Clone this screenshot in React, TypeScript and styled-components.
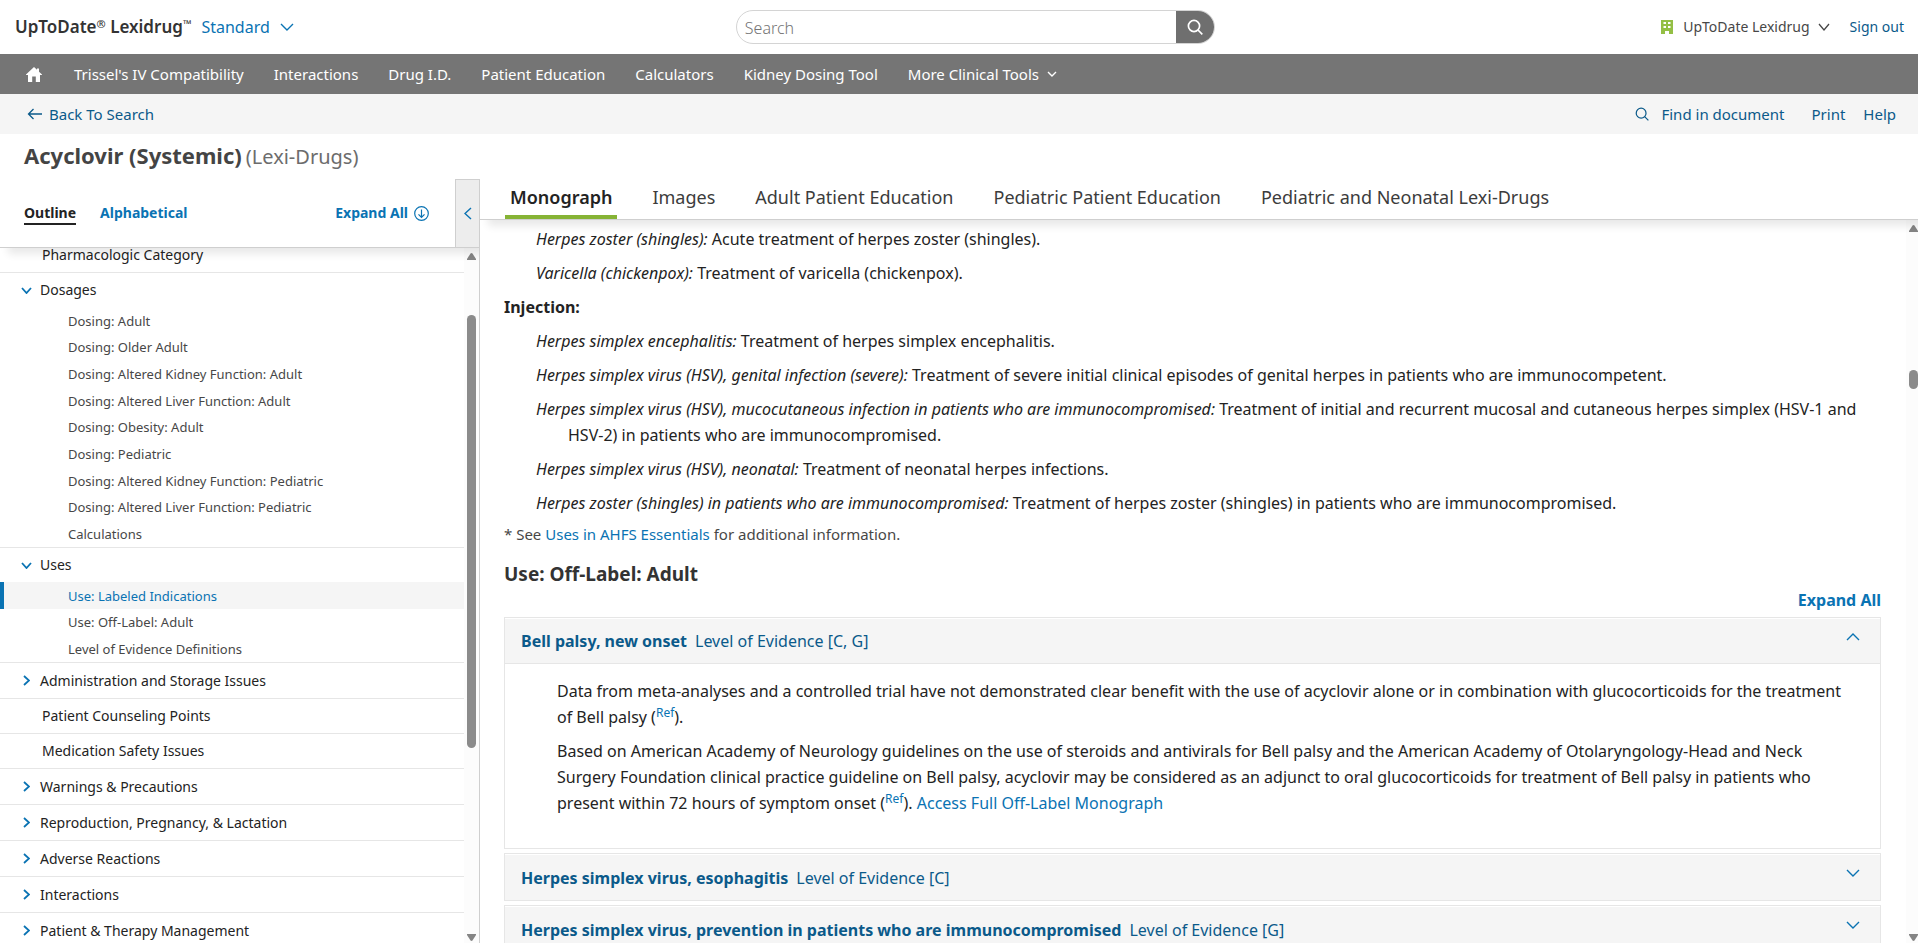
import React, { useState } from 'react';
import styled, { createGlobalStyle, css } from 'styled-components';

const c = {
  blue: '#0a73b3',
  deep: '#0b5a8a',
  text: '#232323',
  soft: '#474747',
  line: '#e6e6e6',
  edge: '#cfcfcf',
  panel: '#f5f5f5',
  bar: '#757575',
  green: '#86b335',
};

const GlobalStyle = createGlobalStyle`
  *, *::before, *::after { box-sizing: border-box; }
  body {
    margin: 0;
    background: #fff;
    color: ${c.text};
    font-family: "Noto Sans", "Open Sans", sans-serif;
    font-size: 16px;
  }
  a { color: inherit; text-decoration: none; }
  ul { list-style: none; margin: 0; padding: 0; }
  p, h1, h2, h3 { margin: 0; }
  button { font: inherit; color: inherit; background: none; border: 0; padding: 0; cursor: pointer; }
  svg { display: block; flex: none; }
`;

const Page = styled.div`
  display: flex;
  flex-direction: column;
  height: 100vh;
  overflow: hidden;
`;

const Header = styled.header`
  display: grid;
  grid-template-columns: minmax(0, 46fr) minmax(0, 30fr) minmax(0, 44fr);
  align-items: center;
  flex: none;
  height: 54px;
  padding-left: 1px;
`;

const Brand = styled.div`
  display: flex;
  align-items: center;
  gap: 10px;
  padding-left: 14px;
  white-space: nowrap;
`;

const Logo = styled.span`
  font-size: 17px;
  font-weight: 600;
  line-height: 24px;
  color: #333;
`;

const Mark = styled.sup`
  font-size: 11px;
  font-weight: 500;
  line-height: 0;
  vertical-align: 5px;
`;

const EditionButton = styled.button`
  display: flex;
  align-items: center;
  gap: 10px;
  line-height: 24px;
  color: ${c.blue};
`;

const SearchForm = styled.form`
  display: flex;
  height: 34px;
  border: 1px solid #d4d4d4;
  border-radius: 17px;
  overflow: hidden;
`;

const SearchInput = styled.input`
  flex: 1;
  min-width: 0;
  border: 0;
  outline: 0;
  padding: 2px 8px 0;
  font: inherit;
  font-weight: 300;
  background: none;
  &::placeholder { color: #757575; opacity: 1; }
`;

const SearchButton = styled.button`
  display: grid;
  place-items: center;
  width: 38px;
  background: #6f6f6f;
  color: #fff;
`;

const Account = styled.div`
  display: flex;
  align-items: center;
  justify-content: flex-end;
  gap: 20px;
  padding-right: 14px;
  font-size: 14px;
  line-height: 20px;
  white-space: nowrap;
`;

const AccountButton = styled.button`
  display: flex;
  align-items: center;
  gap: 8px;
  color: ${c.soft};
`;

const Building = styled.svg`
  margin-right: 2px;
`;

const DeepLink = styled.a`
  display: flex;
  align-items: center;
  color: ${c.deep};
`;

const NavBar = styled.nav`
  display: flex;
  align-items: center;
  flex: none;
  gap: 30px;
  height: 40px;
  padding-left: 26px;
  background: ${c.bar};
  color: #fff;
  font-size: 15px;
  line-height: 20px;
  white-space: nowrap;
`;

const HomeLink = styled.a`
  margin-right: 2px;
`;

const MoreButton = styled.button`
  display: flex;
  align-items: center;
  gap: 8px;
`;

const CrumbBar = styled.div`
  display: flex;
  align-items: center;
  justify-content: space-between;
  flex: none;
  height: 40px;
  padding: 0 22px 0 27px;
  background: ${c.panel};
  font-size: 15px;
  line-height: 20px;
`;

const BackLink = styled(DeepLink)`
  gap: 7px;
`;

const DocActions = styled.div`
  display: flex;
  gap: 18px;
`;

const FindButton = styled.button`
  display: flex;
  align-items: center;
  gap: 12px;
  margin-right: 9px;
  color: ${c.deep};
`;

const TitleRow = styled.div`
  display: flex;
  align-items: baseline;
  gap: 4px;
  flex: none;
  height: 45px;
  padding: 6px 0 0 24px;
`;

const Title = styled.h1`
  font-size: 22px;
  font-weight: 700;
  line-height: 30px;
  color: #444;
`;

const Subtitle = styled.span`
  font-size: 20px;
  line-height: 30px;
  color: #6c6c6c;
`;

const Workspace = styled.div`
  display: grid;
  grid-template-columns: 480px minmax(0, 1fr);
  flex: 1;
  min-height: 0;
`;

const Sidebar = styled.aside`
  display: flex;
  flex-direction: column;
  min-height: 0;
  overflow: hidden;
  border-right: 1px solid ${c.edge};
`;

const SidebarHead = styled.div`
  position: relative;
  z-index: 1;
  display: flex;
  flex: none;
  height: 69px;
  border-bottom: 1px solid ${c.edge};
  background: #fff;
  box-shadow: 8px 6px 8px rgba(0, 0, 0, 0.09);
`;

const SidebarTabs = styled.div`
  display: flex;
  align-items: center;
  flex: 1;
  gap: 24px;
  padding: 0 26px 0 24px;
  font-size: 14px;
  font-weight: 700;
  line-height: 20px;
`;

const OrderTab = styled.button<{ $active?: boolean }>`
  padding-top: 2px;
  border-bottom: 2px solid ${(p) => (p.$active ? c.text : 'transparent')};
  color: ${(p) => (p.$active ? c.text : c.blue)};
`;

const ExpandOutline = styled.button`
  display: flex;
  align-items: center;
  gap: 6px;
  margin-left: auto;
  color: ${c.blue};
`;

const CollapseButton = styled.button`
  display: grid;
  place-items: center;
  width: 24px;
  border: 1px solid ${c.edge};
  border-width: 1px 0 0 1px;
  background: #ededed;
  color: ${c.blue};
`;

const ScrollArea = styled.div<{ $bar: number }>`
  display: grid;
  grid-template-columns: minmax(0, 1fr) ${(p) => p.$bar}px;
  flex: 1;
  min-height: 0;
`;

const Viewport = styled.div`
  min-height: 0;
  overflow: hidden;
`;

const Bar = styled.div`
  display: flex;
  flex-direction: column;
  align-items: flex-end;
  min-height: 0;
  padding: 5px 0 2px;
  background: #fcfcfc;
  color: #858585;
`;

const SideBarTrack = styled(Bar)`
  padding-right: 3px;
`;

const Space = styled.div<{ $part: number }>`
  flex: ${(p) => p.$part} 1 0;
`;

const Thumb = styled(Space)`
  width: 9px;
  border-radius: 5px;
  background: #8b8b8b;
`;

const OutlineList = styled.ul`
  margin-top: -10px;
  font-size: 14px;
  line-height: 20px;
`;

const OutlineItem = styled.li`
  & + & { border-top: 1px solid ${c.line}; }
`;

const Leaf = styled.a`
  display: flex;
  align-items: center;
  height: 34px;
  padding-left: 42px;
`;

const GroupButton = styled.button<{ $open?: boolean }>`
  display: flex;
  align-items: center;
  gap: 8px;
  width: 100%;
  height: ${(p) => (p.$open ? 34 : 35)}px;
  padding-left: 20px;
  text-align: left;
`;

const SubItem = styled.li`
  height: 27px;
  &:nth-child(3n + 2) { height: 26px; }
`;

const SubLink = styled.a<{ $current?: boolean }>`
  display: flex;
  align-items: center;
  height: 100%;
  padding-left: 68px;
  font-size: 13px;
  color: ${c.soft};
  ${(p) => p.$current && css`
    background: ${c.panel};
    color: ${c.blue};
    box-shadow: inset 4px 0 0 ${c.blue};
  `}
`;

const Main = styled.main`
  display: flex;
  flex-direction: column;
  min-height: 0;
  overflow: hidden;
`;

const DocTabs = styled.nav`
  position: relative;
  z-index: 1;
  display: flex;
  flex: none;
  gap: 30px;
  height: 41px;
  padding-left: 25px;
  border-bottom: 1px solid ${c.edge};
  background: #fff;
  box-shadow: 8px 6px 8px rgba(0, 0, 0, 0.09);
  white-space: nowrap;
`;

const DocTab = styled.a<{ $active?: boolean }>`
  padding: 5px 5px 0;
  border-bottom: 4px solid ${(p) => (p.$active ? c.green : 'transparent')};
  font-size: 18px;
  font-weight: ${(p) => (p.$active ? 600 : 400)};
  line-height: 26px;
  color: ${(p) => (p.$active ? c.text : '#3c3c3c')};
`;

const Article = styled.article`
  padding: 6px 25px 0 24px;
  line-height: 26px;
`;

const Indication = styled.p`
  margin: 0 0 8px 64px;
  text-indent: -32px;
`;

const Route = styled.h3`
  margin-bottom: 8px;
  font-size: 16px;
  font-weight: 700;
  line-height: 26px;
`;

const Footnote = styled.p`
  font-size: 15px;
  line-height: 20px;
  color: ${c.soft};
`;

const Link = styled.a`
  color: ${c.blue};
`;

const SectionTitle = styled.h2`
  margin-top: 17px;
  font-size: 19px;
  line-height: 26px;
  color: #333;
`;

const ExpandRow = styled.div`
  display: flex;
  justify-content: flex-end;
  margin-bottom: 4px;
`;

const ExpandAll = styled.button`
  font-weight: 700;
  line-height: 26px;
  color: ${c.blue};
`;

const Card = styled.section`
  margin-bottom: 4px;
  border: 1px solid ${c.line};
  padding-top: 1px;
`;

const CardHead = styled.button<{ $open?: boolean }>`
  display: flex;
  align-items: center;
  gap: 8px;
  width: 100%;
  height: 45px;
  padding: 0 20px 0 16px;
  border-bottom: ${(p) => (p.$open ? `1px solid ${c.line}` : '0')};
  background: ${c.panel};
  color: ${c.deep};
  text-align: left;
`;

const CardIcon = styled.span`
  align-self: flex-start;
  margin: 14px 0 0 auto;
  color: ${c.blue};
`;

const CardBody = styled.div`
  padding: 14px 32px 32px 52px;
`;

const Note = styled.p`
  & + & { margin-top: 8px; }
`;

const Ref = styled.sup`
  font-size: 12px;
  line-height: 0;
  vertical-align: 6px;
  color: ${c.blue};
`;

type Dir = 'up' | 'down' | 'left' | 'right';

/* An open angle; `long` is its span and `short` its depth. */
function Chevron({ dir, long, short, weight }: { dir: Dir; long: number; short: number; weight: number }) {
  const vertical = dir === 'up' || dir === 'down';
  const w = (vertical ? long : short) + 2;
  const h = (vertical ? short : long) + 2;
  const points = {
    down: `1,1 ${w / 2},${h - 1} ${w - 1},1`,
    up: `1,${h - 1} ${w / 2},1 ${w - 1},${h - 1}`,
    right: `1,1 ${w - 1},${h / 2} 1,${h - 1}`,
    left: `${w - 1},1 1,${h / 2} ${w - 1},${h - 1}`,
  }[dir];
  return (
    <svg width={w} height={h} viewBox={`0 0 ${w} ${h}`} fill="none" stroke="currentColor" strokeWidth={weight} aria-hidden="true">
      <polyline points={points} />
    </svg>
  );
}

function Magnifier({ size, weight }: { size: number; weight: number }) {
  return (
    <svg width={size} height={size} viewBox="0 0 16 16" fill="none" stroke="currentColor" strokeWidth={weight} aria-hidden="true">
      <circle cx="7" cy="7" r="5.6" />
      <path d="M11 11l4.3 4.3" />
    </svg>
  );
}

function Arrowhead({ down }: { down?: boolean }) {
  return (
    <svg width="9" height="7" viewBox="0 0 9 7" fill="currentColor" aria-hidden="true">
      <path d={down ? 'M0 0h9v1L5.5 6.5Q4.5 7.4 3.5 6.5L0 1z' : 'M0 7h9V6L5.5.5Q4.5-.4 3.5.5L0 6z'} />
    </svg>
  );
}

const navLinks = [
  "Trissel's IV Compatibility",
  'Interactions',
  'Drug I.D.',
  'Patient Education',
  'Calculators',
  'Kidney Dosing Tool',
];

type Entry = { label: string; children?: string[]; group?: boolean };

const outline: Entry[] = [
  { label: 'Pharmacologic Category' },
  {
    label: 'Dosages',
    group: true,
    children: [
      'Dosing: Adult',
      'Dosing: Older Adult',
      'Dosing: Altered Kidney Function: Adult',
      'Dosing: Altered Liver Function: Adult',
      'Dosing: Obesity: Adult',
      'Dosing: Pediatric',
      'Dosing: Altered Kidney Function: Pediatric',
      'Dosing: Altered Liver Function: Pediatric',
      'Calculations',
    ],
  },
  {
    label: 'Uses',
    group: true,
    children: ['Use: Labeled Indications', 'Use: Off-Label: Adult', 'Level of Evidence Definitions'],
  },
  { label: 'Administration and Storage Issues', group: true },
  { label: 'Patient Counseling Points' },
  { label: 'Medication Safety Issues' },
  { label: 'Warnings & Precautions', group: true },
  { label: 'Reproduction, Pregnancy, & Lactation', group: true },
  { label: 'Adverse Reactions', group: true },
  { label: 'Interactions', group: true },
  { label: 'Patient & Therapy Management', group: true },
];

const docTabs = [
  'Monograph',
  'Images',
  'Adult Patient Education',
  'Pediatric Patient Education',
  'Pediatric and Neonatal Lexi-Drugs',
];

const oral = [
  ['Herpes zoster (shingles):', 'Acute treatment of herpes zoster (shingles).'],
  ['Varicella (chickenpox):', 'Treatment of varicella (chickenpox).'],
];

const injection = [
  ['Herpes simplex encephalitis:', 'Treatment of herpes simplex encephalitis.'],
  [
    'Herpes simplex virus (HSV), genital infection (severe):',
    'Treatment of severe initial clinical episodes of genital herpes in patients who are immunocompetent.',
  ],
  [
    'Herpes simplex virus (HSV), mucocutaneous infection in patients who are immunocompromised:',
    'Treatment of initial and recurrent mucosal and cutaneous herpes simplex (HSV-1 and HSV-2) in patients who are immunocompromised.',
  ],
  ['Herpes simplex virus (HSV), neonatal:', 'Treatment of neonatal herpes infections.'],
  [
    'Herpes zoster (shingles) in patients who are immunocompromised:',
    'Treatment of herpes zoster (shingles) in patients who are immunocompromised.',
  ],
];

function Accordion({ title, level, initiallyOpen = false, children }: {
  title: string;
  level: string;
  initiallyOpen?: boolean;
  children?: React.ReactNode;
}) {
  const [open, setOpen] = useState(initiallyOpen);
  return (
    <Card>
      <CardHead $open={open} aria-expanded={open} onClick={() => setOpen(!open)}>
        <b>{title}</b>
        <span>{level}</span>
        <CardIcon>
          <Chevron dir={open ? 'up' : 'down'} long={12} short={6} weight={1.4} />
        </CardIcon>
      </CardHead>
      {open && children && <CardBody>{children}</CardBody>}
    </Card>
  );
}

const GroupIcon = styled.span`
  display: flex;
  justify-content: center;
  width: 12px;
  color: ${c.blue};
`;

function OutlineEntry({ entry }: { entry: Entry }) {
  const [open, setOpen] = useState(Boolean(entry.children));
  if (!entry.group) {
    return (
      <OutlineItem>
        <Leaf href="#">{entry.label}</Leaf>
      </OutlineItem>
    );
  }
  return (
    <OutlineItem>
      <GroupButton $open={open} aria-expanded={open} onClick={() => setOpen(!open)}>
        <GroupIcon>
          <Chevron dir={open ? 'down' : 'right'} long={9} short={5} weight={1.8} />
        </GroupIcon>
        {entry.label}
      </GroupButton>
      {open && entry.children && (
        <ul>
          {entry.children.map((label) => (
            <SubItem key={label}>
              <SubLink href="#" $current={label === 'Use: Labeled Indications'}>{label}</SubLink>
            </SubItem>
          ))}
        </ul>
      )}
    </OutlineItem>
  );
}

export default function App() {
  return (
    <>
      <GlobalStyle />
      <Page>
        <Header>
          <Brand>
            <Logo>
              UpToDate<Mark>®</Mark> Lexidrug<Mark>™</Mark>
            </Logo>
            <EditionButton>
              Standard
              <Chevron dir="down" long={12} short={6} weight={1.4} />
            </EditionButton>
          </Brand>
          <SearchForm role="search" onSubmit={(e) => e.preventDefault()}>
            <SearchInput type="search" placeholder="Search" aria-label="Search" />
            <SearchButton aria-label="Submit search">
              <Magnifier size={16} weight={1.7} />
            </SearchButton>
          </SearchForm>
          <Account>
            <AccountButton>
              <Building width="12" height="14" viewBox="0 0 12 14" fill="#94bf45" aria-hidden="true">
                <path
                  fillRule="evenodd"
                  d="M0 0h12v14H8v-3H4v3H0zM2.5 2v2H5V2zM7 2v2h2.5V2zM2.5 6v2H5V6zM7 6v2h2.5V6z"
                />
              </Building>
              UpToDate Lexidrug
              <Chevron dir="down" long={10} short={6} weight={1.3} />
            </AccountButton>
            <DeepLink href="#">Sign out</DeepLink>
          </Account>
        </Header>

        <NavBar>
          <HomeLink href="#" aria-label="Home">
            <svg width="16" height="15" viewBox="0 0 16 15" fill="currentColor" aria-hidden="true">
              <path d="M8 0l3 2.8V1.5h2v3.2L16 7.5V8h-2v7H9.8V9.5H6.2V15H2V8H0v-.5z" />
            </svg>
          </HomeLink>
          {navLinks.map((label) => (
            <a key={label} href="#">{label}</a>
          ))}
          <MoreButton>
            More Clinical Tools
            <Chevron dir="down" long={8} short={4} weight={1.4} />
          </MoreButton>
        </NavBar>

        <CrumbBar>
          <BackLink href="#">
            <svg width="15" height="12" viewBox="0 0 15 12" fill="none" stroke="currentColor" strokeWidth="1.3" aria-hidden="true">
              <path d="M15 6H1.5M6.500 1L1.5 6l5 5" />
            </svg>
            Back To Search
          </BackLink>
          <DocActions>
            <FindButton>
              <Magnifier size={14} weight={1.4} />
              Find in document
            </FindButton>
            <DeepLink href="#">Print</DeepLink>
            <DeepLink href="#">Help</DeepLink>
          </DocActions>
        </CrumbBar>

        <TitleRow>
          <Title>Acyclovir (Systemic)</Title>
          <Subtitle>(Lexi-Drugs)</Subtitle>
        </TitleRow>

        <Workspace>
          <Sidebar>
            <SidebarHead>
              <SidebarTabs>
                <OrderTab $active>Outline</OrderTab>
                <OrderTab>Alphabetical</OrderTab>
                <ExpandOutline>
                  Expand All
                  <svg width="15" height="15" viewBox="0 0 15 15" fill="none" stroke="currentColor" strokeWidth="1.2" aria-hidden="true">
                    <circle cx="7.5" cy="7.5" r="6.8" />
                    <path d="M7.5 3.5v8M4.5 8.3l3 3 3-3" />
                  </svg>
                </ExpandOutline>
              </SidebarTabs>
              <CollapseButton aria-label="Collapse outline">
                <Chevron dir="left" long={11} short={6} weight={1.4} />
              </CollapseButton>
            </SidebarHead>
            <ScrollArea $bar={15}>
              <Viewport>
                <OutlineList>
                  {outline.map((entry) => (
                    <OutlineEntry key={entry.label} entry={entry} />
                  ))}
                </OutlineList>
              </Viewport>
              <SideBarTrack aria-hidden="true">
                <Arrowhead />
                <Space $part={55} />
                <Thumb $part={433} />
                <Space $part={186} />
                <Arrowhead down />
              </SideBarTrack>
            </ScrollArea>
          </Sidebar>

          <Main>
            <DocTabs>
              {docTabs.map((label, i) => (
                <DocTab key={label} href="#" $active={i === 0}>{label}</DocTab>
              ))}
            </DocTabs>
            <ScrollArea $bar={12}>
              <Viewport>
                <Article>
                  {oral.map(([name, text]) => (
                    <Indication key={name}><i>{name}</i> {text}</Indication>
                  ))}
                  <Route>Injection:</Route>
                  {injection.map(([name, text]) => (
                    <Indication key={name}><i>{name}</i> {text}</Indication>
                  ))}
                  <Footnote>
                    * See <Link href="#">Uses in AHFS Essentials</Link> for additional information.
                  </Footnote>
                  <SectionTitle>Use: Off-Label: Adult</SectionTitle>
                  <ExpandRow>
                    <ExpandAll>Expand All</ExpandAll>
                  </ExpandRow>
                  <Accordion title="Bell palsy, new onset" level="Level of Evidence [C, G]" initiallyOpen>
                    <Note>
                      Data from meta-analyses and a controlled trial have not demonstrated clear benefit with the use of
                      acyclovir alone or in combination with glucocorticoids for the treatment of Bell palsy
                      (<Ref><a href="#">Ref</a></Ref>).
                    </Note>
                    <Note>
                      Based on American Academy of Neurology guidelines on the use of steroids and antivirals for Bell
                      palsy and the American Academy of Otolaryngology-Head and Neck Surgery Foundation clinical practice
                      guideline on Bell palsy, acyclovir may be considered as an adjunct to oral glucocorticoids for
                      treatment of Bell palsy in patients who present within 72 hours of symptom onset
                      (<Ref><a href="#">Ref</a></Ref>). <Link href="#">Access Full Off-Label Monograph</Link>
                    </Note>
                  </Accordion>
                  <Accordion title="Herpes simplex virus, esophagitis" level="Level of Evidence [C]" />
                  <Accordion
                    title="Herpes simplex virus, prevention in patients who are immunocompromised"
                    level="Level of Evidence [G]"
                  />
                </Article>
              </Viewport>
              <Bar aria-hidden="true">
                <Arrowhead />
                <Space $part={138} />
                <Thumb $part={19} />
                <Space $part={545} />
                <Arrowhead down />
              </Bar>
            </ScrollArea>
          </Main>
        </Workspace>
      </Page>
    </>
  );
}
